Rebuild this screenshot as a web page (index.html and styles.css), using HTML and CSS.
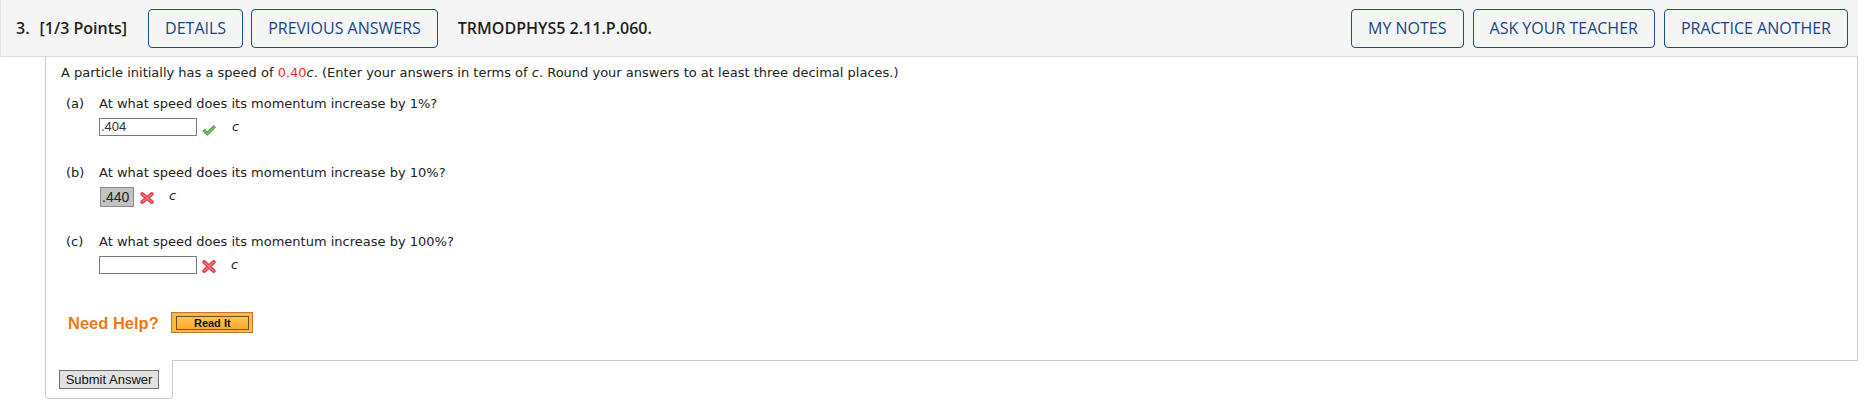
FILE: index.html
```html
<!DOCTYPE html>
<html lang="en">
<head>
<meta charset="utf-8">
<title>TRMODPHYS5 2.11.P.060.</title>
<link rel="stylesheet" href="styles.css">
</head>
<body>
<div class="page">
  <div class="qhead">
    <div class="qnum"><span>3.</span><span class="pts">[1/3 Points]</span></div>
    <div class="btns left">
      <button class="hbtn">DETAILS</button>
      <button class="hbtn">PREVIOUS ANSWERS</button>
    </div>
    <div class="qid">TRMODPHYS5 2.11.P.060.</div>
    <div class="btns right">
      <button class="hbtn">MY NOTES</button>
      <button class="hbtn">ASK YOUR TEACHER</button>
      <button class="hbtn">PRACTICE ANOTHER</button>
    </div>
  </div>
  <div class="qbody">
    <p class="intro">A particle initially has a speed of <span class="red">0.40</span><i>c</i>. (Enter your answers in terms of <i>c</i>. Round your answers to at least three decimal places.)</p>

    <div class="part">
      <div class="qline"><span class="plabel">(a)</span><span>At what speed does its momentum increase by 1%?</span></div>
      <div class="arow">
        <span class="ans">.404</span>
        <svg class="mark check" width="14" height="11" viewBox="0 0 14 11"><path d="M0.8 6.2 L2.8 4.3 L5.4 6.8 L11.8 0.6 L13.4 2.3 L5.4 10.3 Z" fill="#58b54a" stroke="#2f7f2a" stroke-width="0.8" stroke-linejoin="round"/><path d="M2.2 5.6 L5.4 8.6 L12.2 1.9" fill="none" stroke="#8fd67f" stroke-width="0.7"/></svg>
        <i class="unit u-a">c</i>
      </div>
    </div>

    <div class="part">
      <div class="qline"><span class="plabel">(b)</span><span>At what speed does its momentum increase by 10%?</span></div>
      <div class="arow">
        <span class="ans graded">.440</span>
        <svg class="mark cross x-b" width="14" height="12" viewBox="0 0 14 12"><path d="M2.2 2 L11.8 10 M11.8 2 L2.2 10" stroke="#e2424a" stroke-width="3.8" stroke-linecap="round"/><path d="M2.6 2.3 L11.4 9.7 M11.4 2.3 L2.6 9.7" stroke="#f47a80" stroke-width="1.2" stroke-linecap="round"/></svg>
        <i class="unit u-b">c</i>
      </div>
    </div>

    <div class="part">
      <div class="qline"><span class="plabel">(c)</span><span>At what speed does its momentum increase by 100%?</span></div>
      <div class="arow">
        <span class="ans"></span>
        <svg class="mark cross x-c" width="14" height="13" viewBox="0 0 14 13"><path d="M2.2 2 L11.8 11 M11.8 2 L2.2 11" stroke="#e2424a" stroke-width="3.8" stroke-linecap="round"/><path d="M2.6 2.3 L11.4 10.7 M11.4 2.3 L2.6 10.7" stroke="#f47a80" stroke-width="1.2" stroke-linecap="round"/></svg>
        <i class="unit u-c">c</i>
      </div>
    </div>

    <div class="help">
      <span class="needhelp">Need Help?</span>
      <span class="readit"><span class="readit-in">Read It</span></span>
    </div>
  </div>
  <div class="qfoot">
    <div class="submittab"><button class="submit">Submit Answer</button></div>
    <div class="footfill"></div>
  </div>
</div>
</body>
</html>
```

FILE: styles.css
```css
* { box-sizing: border-box; }

body {
  margin: 0;
  background: #ffffff;
  font-family: "DejaVu Sans", Verdana, sans-serif;
  color: #222222;
}

.page {
  width: 1858px;
}

/* header */
.qhead {
  display: flex;
  align-items: center;
  height: 57px;
  background: #f5f5f5;
  border-bottom: 1px solid #dcdcdc;
  border-left: 1px solid #e2e2e2;
  padding: 0 10px 0 15px;
  font-family: "Open Sans", sans-serif;
  color: #1f1f1f;
}

.qnum {
  font-size: 16px;
  font-weight: 650;
  white-space: nowrap;
}

.qnum .pts {
  margin-left: 10px;
}

.btns {
  display: flex;
  gap: 8px;
}

.btns.left {
  margin-left: 21px;
}

.btns.right {
  margin-left: auto;
  gap: 9px;
}

.hbtn {
  height: 39px;
  padding: 0 16px;
  border: 1px solid #1c4e8c;
  border-radius: 4px;
  background: #f5f5f5;
  color: #164884;
  font-family: "Open Sans", sans-serif;
  font-size: 16px;
  font-weight: 500;
  white-space: nowrap;
}

.qid {
  margin-left: 20px;
  font-size: 16px;
  font-weight: 650;
  white-space: nowrap;
}

/* body */
.qbody {
  margin-left: 45px;
  border-left: 1px solid #cccccc;
  border-right: 1px solid #cccccc;
  padding: 8px 15px 27px 15px;
  font-size: 13px;
  line-height: 16px;
}

.intro {
  margin: 0 0 15px 0;
}

.red {
  color: #ec2f2a;
}

.part {
  height: 69px;
  padding-left: 5px;
}

.qline {
  display: flex;
}

.plabel {
  width: 33px;
}

.arow {
  display: flex;
  align-items: flex-start;
  margin-top: 6px;
  margin-left: 33px;
}

.ans {
  display: block;
  width: 98px;
  height: 18px;
  border: 1px solid #7a7a7a;
  background: #ffffff;
  padding-left: 1px;
  font-family: "Liberation Sans", Arial, sans-serif;
  font-size: 13px;
  line-height: 16px;
  color: #333333;
}

.ans.graded {
  width: 34px;
  height: 20px;
  margin-left: 1px;
  background: #c2c2c2;
  border-color: #8a8a8a;
  font-size: 14px;
  line-height: 18px;
  color: #222222;
}

.mark {
  display: block;
  flex: none;
}

.check {
  margin-left: 5px;
  margin-top: 7px;
}

.x-b {
  margin-left: 6px;
  margin-top: 5px;
}

.x-c {
  margin-left: 5px;
  margin-top: 4px;
}

.unit {
  display: block;
  margin-top: 1px;
  font-size: 13px;
  line-height: 16px;
  color: #222222;
}

.u-a { margin-left: 16px; }
.u-b { margin-left: 15px; }
.u-c { margin-left: 15px; }

/* help */
.help {
  display: flex;
  align-items: center;
  height: 21px;
  margin-top: 9px;
  padding-left: 7px;
}

.needhelp {
  font-family: "Liberation Sans", Arial, sans-serif;
  font-weight: 700;
  font-size: 16.5px;
  color: #ed7a15;
}

.readit {
  display: block;
  margin-left: 12px;
  width: 82px;
  height: 21px;
  border: 1px solid #c47624;
  background: #ffb74a;
  padding: 3px 3px 2px 4px;
}

.readit-in {
  display: block;
  height: 14px;
  border: 1px solid #74501f;
  background: linear-gradient(#ffc255, #ffaa30);
  text-align: center;
  font-family: "Liberation Sans", Arial, sans-serif;
  font-weight: 700;
  font-size: 11px;
  line-height: 12px;
  color: #111111;
}

/* footer */
.qfoot {
  display: flex;
  margin-left: 45px;
}

.submittab {
  border: 1px solid #cccccc;
  border-top: none;
  border-radius: 0 0 4px 4px;
  padding: 10px 13px 9px 13px;
}

.submit {
  display: block;
  width: 100px;
  height: 19px;
  padding: 0;
  border: 1px solid #707070;
  background: #e1e1e1;
  font-family: "Liberation Sans", Arial, sans-serif;
  font-size: 13px;
  line-height: 16px;
  color: #111111;
}

.footfill {
  flex: 1;
  height: 1px;
  border-top: 1px solid #cccccc;
}
```
